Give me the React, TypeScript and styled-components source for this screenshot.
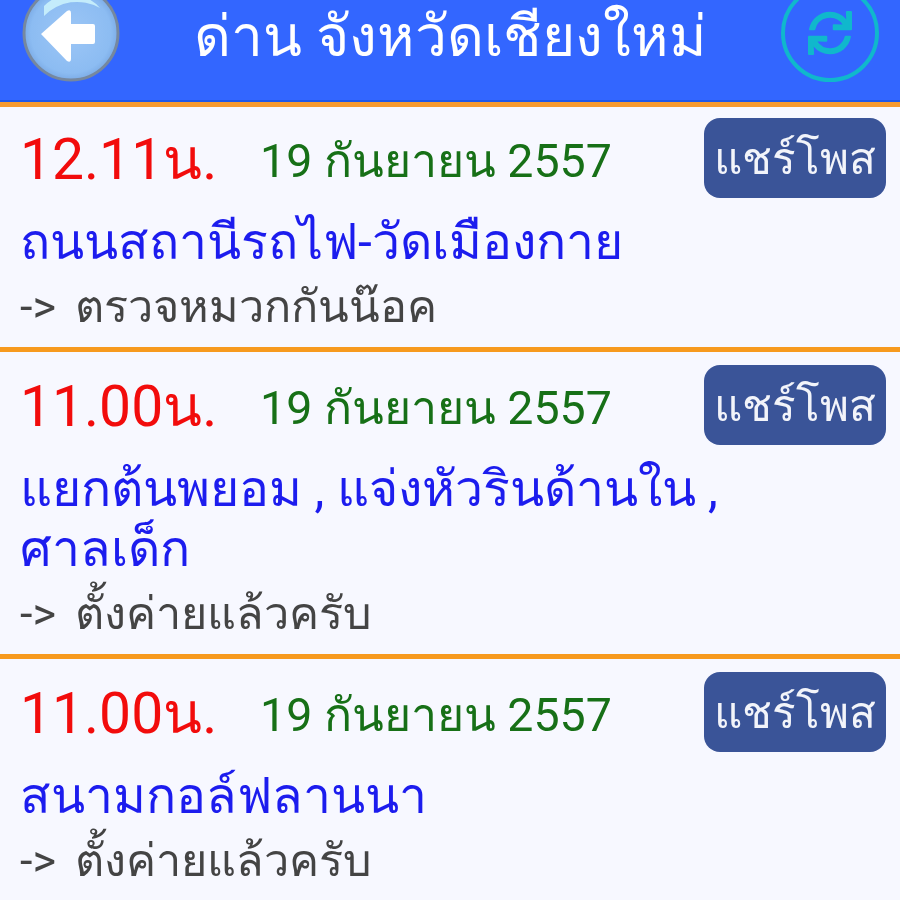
import { createGlobalStyle, styled } from "styled-components";
import { FaSync } from "react-icons/fa";

const GlobalStyle = createGlobalStyle`
  html, body {
    margin: 0;
    padding: 0;
    background: #f7f8ff;
  }
`;

const Page = styled.div`
  width: 900px;
  height: 900px;
  overflow: hidden;
  font-family: "Roboto", "Noto Sans", "DejaVu Sans", sans-serif;
  background: #f7f8ff;
  filter: blur(0.7px);
`;

const Header = styled.header`
  height: 102px;
  padding: 0 21px 0 22px;
  display: flex;
  justify-content: space-between;
  background: #3366ff;
  box-shadow: inset 0 -2px 0 #1f58e8;
  border-bottom: 5px solid #f79a2e;
`;

const BackIcon = styled.svg`
  width: 98px;
  height: 98px;
  margin-top: -16px;
  flex: none;
`;

const RefreshBadge = styled.div`
  width: 98px;
  height: 98px;
  margin-top: -16px;
  flex: none;
  box-sizing: border-box;
  border: 4px solid #10b8cc;
  border-radius: 50%;
  display: flex;
  align-items: center;
  justify-content: center;
  color: #10b8cc;
`;

const Title = styled.h1`
  margin: 0;
  height: 73px;
  line-height: 73px;
  font-size: 57px;
  font-weight: 400;
  color: #fff;
  white-space: nowrap;
`;

const Row = styled.article`
  border-bottom: 5px solid #f79a1e;
  padding: 13px 14px 12px 20px;

  &:first-of-type {
    padding-top: 11px;
  }
`;

const TopLine = styled.div`
  display: flex;
  align-items: flex-start;
`;

const Time = styled.span`
  width: 240px;
  height: 80px;
  line-height: 84px;
  font-size: 57px;
  color: #f20c0c;
  white-space: nowrap;
`;

const DateText = styled.span`
  height: 80px;
  line-height: 86px;
  font-size: 46.5px;
  color: #177017;
  white-space: nowrap;
`;

const ShareButton = styled.button`
  margin-left: auto;
  width: 182px;
  height: 80px;
  padding: 0;
  border: 0;
  border-radius: 16px;
  background: #3a5498;
  color: #f2f4fa;
  font-family: inherit;
  font-size: 44px;
  white-space: nowrap;
`;

const Place = styled.div`
  margin-top: 14px;
  max-width: 720px;
  font-size: 50px;
  line-height: 60px;
  color: #1c1cee;
`;

const Note = styled.div`
  margin-top: 7px;
  font-size: 45px;
  line-height: 56px;
  word-spacing: 8px;
  color: #444;
  white-space: nowrap;
`;

const rows = [
  { time: "12.11น.", place: "ถนนสถานีรถไฟ-วัดเมืองกาย", note: "-> ตรวจหมวกกันน๊อค" },
  { time: "11.00น.", place: "แยกต้นพยอม , แจ่งหัวรินด้านใน , ศาลเด็ก", note: "-> ตั้งค่ายแล้วครับ" },
  { time: "11.00น.", place: "สนามกอล์ฟลานนา", note: "-> ตั้งค่ายแล้วครับ" },
];

export default function App() {
  return (
    <Page>
      <GlobalStyle />
      <Header>
        <BackIcon viewBox="0 0 98 98">
          <defs>
            <radialGradient id="ball" cx="50%" cy="50%" r="52%">
              <stop offset="0%" stopColor="#9cc6f6" />
              <stop offset="82%" stopColor="#8cbcf2" />
              <stop offset="100%" stopColor="#78a8e4" />
            </radialGradient>
          </defs>
          <circle cx="49" cy="49" r="47" fill="url(#ball)" stroke="#76889f" strokeWidth="3" />
          <path d="M22 22 A38 38 0 0 1 78 24 A46 46 0 0 0 22 32 Z" fill="#c4ecfb" />
          <path d="M19 50 L45 27 Q49 25 49 29 V40 H71 Q73 40 73 42 V58 Q73 60 71 60 H49 V75 Q49 79 45 77 Z" fill="#fff" />
        </BackIcon>
        <Title>ด่าน จังหวัดเชียงใหม่</Title>
        <RefreshBadge>
          <FaSync size={44} />
        </RefreshBadge>
      </Header>
      {rows.map((row, index) => (
        <Row key={index}>
          <TopLine>
            <Time>{row.time}</Time>
            <DateText>19 กันยายน 2557</DateText>
            <ShareButton>แชร์โพส</ShareButton>
          </TopLine>
          <Place>{row.place}</Place>
          <Note>{row.note}</Note>
        </Row>
      ))}
    </Page>
  );
}
